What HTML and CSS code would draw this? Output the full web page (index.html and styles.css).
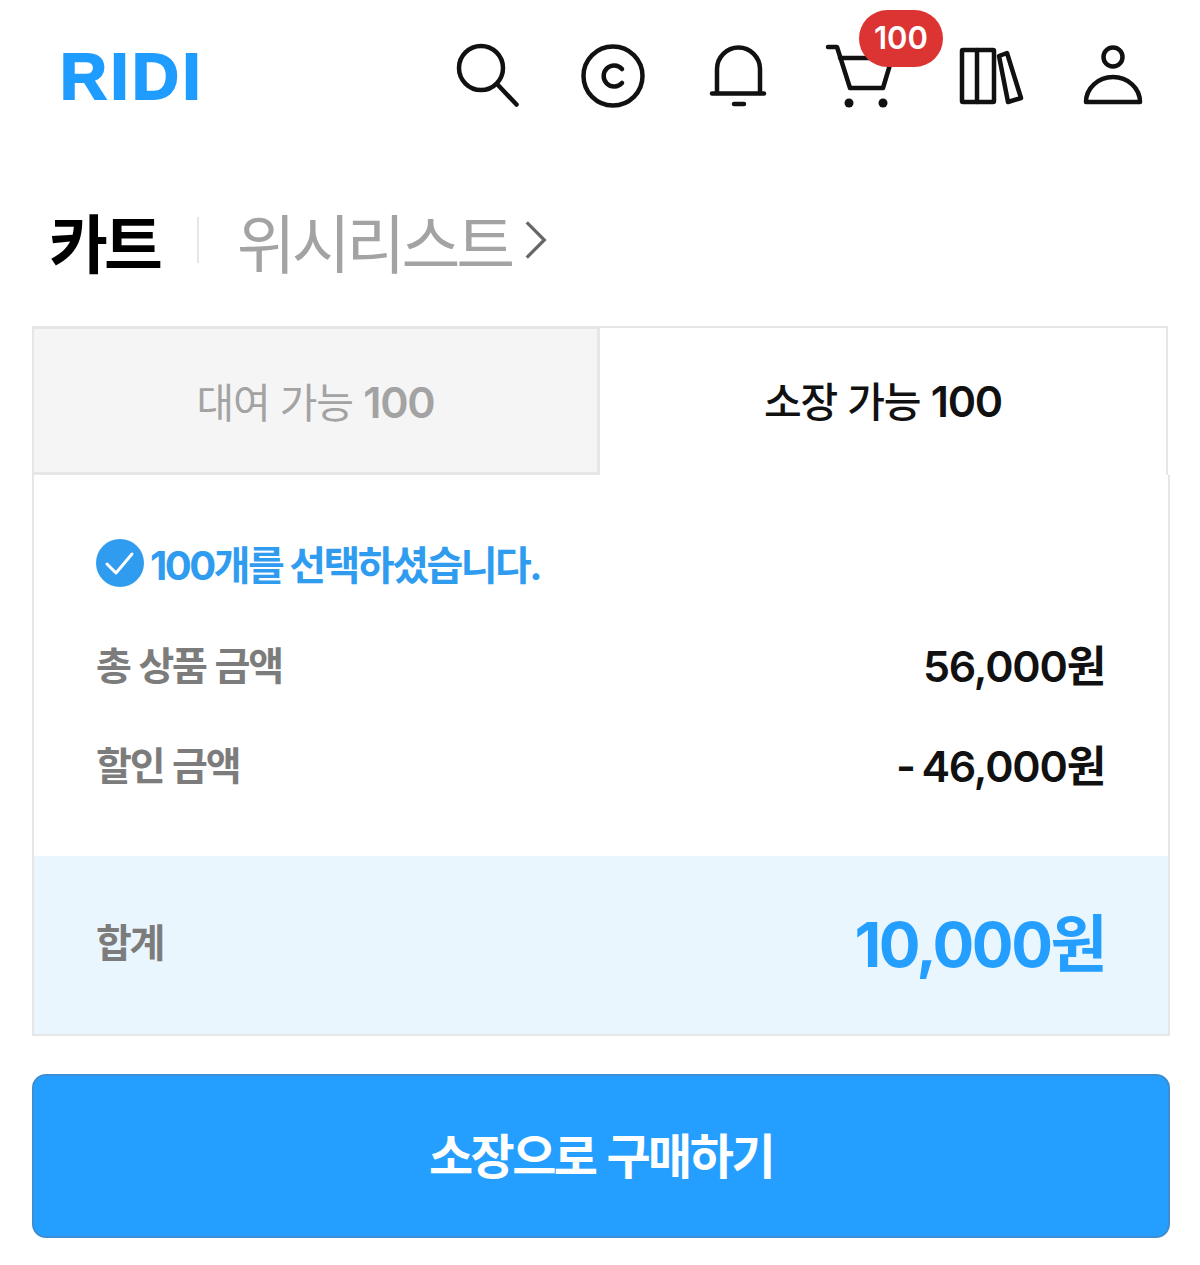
FILE: index.html
```html
<!DOCTYPE html>
<html lang="ko">
<head>
<meta charset="UTF-8" />
<meta name="viewport" content="width=device-width, initial-scale=1" />
<title>RIDI 카트</title>
<link rel="stylesheet" href="styles.css">
</head>
<body>

<header class="topo">
  <div class="logo">RIDI</div>
  <nav class="icones">
    <svg viewBox="0 0 72 72"><circle cx="29" cy="28" r="22"/><path d="M46 45L64.500 64.500"/></svg>
    <svg viewBox="0 0 72 72"><circle cx="36" cy="36" r="29.500"/><path d="M45 29A10.500 10.500 0 1 0 45 43"/></svg>
    <svg viewBox="0 0 72 72"><path d="M10 53.500H62"/><path d="M15 53V29A21.500 21.500 0 0 1 58 29V53"/><path d="M32 64H42"/></svg>
    <div class="carrinho">
      <svg viewBox="0 0 72 72"><path d="M4 7H13L26 48H59L68 18H16"/><circle class="cheio" cx="25" cy="63" r="4.500"/><circle class="cheio" cx="59" cy="63" r="4.500"/></svg>
      <span class="badge">100</span>
    </div>
    <svg class="livros" viewBox="0 0 72 72"><rect x="8" y="10" width="32" height="52" rx="1"/><path d="M23 10V62"/><path d="M45 16L53 13L67 58L54 62Z"/></svg>
    <svg viewBox="0 0 72 72"><circle cx="36" cy="17" r="9.500"/><path d="M9 62H63A27 25 0 0 0 9 62Z"/></svg>
  </nav>
</header>

<main class="carrinho-pagina">
  <div class="titulo">
    <h1>카트</h1>
    <span class="divisor"></span>
    <a class="wishlist" href="#">위시리스트
      <svg viewBox="0 0 26 44"><path d="M3 3L22 22L3 41"/></svg>
    </a>
  </div>

  <div class="abas">
    <div class="aba inativa">대여 가능 <b>100</b></div>
    <div class="aba ativa">소장 가능 <b>100</b></div>
  </div>

  <section class="painel">
    <div class="resumo">
      <div class="selecao">
        <svg viewBox="0 0 48 48"><circle cx="24" cy="24" r="24"/><path d="M11 25L20 34L36 15"/></svg>
        <span>100개를 선택하셨습니다.</span>
      </div>
      <div class="linha"><span>총 상품 금액</span><strong>56,000원</strong></div>
      <div class="linha"><span>할인 금액</span><strong class="desconto">- 46,000원</strong></div>
    </div>
    <div class="total">
      <span>합계</span>
      <strong>10,000원</strong>
    </div>
  </section>

  <button class="comprar">소장으로 구매하기</button>
</main>

</body>
</html>
```

FILE: styles.css
```css
* {
  box-sizing: border-box;
}
body {
  margin: 0;
  background: #fff;
  color: #111;
  font-family: 'Noto Sans CJK KR', 'Noto Sans', sans-serif;
}

/* Topo */
.topo {
  display: flex;
  justify-content: space-between;
  align-items: center;
  height: 152px;
  padding: 0 51px 0 60px;
}
.logo {
  color: #1f9cff;
  font-family: 'Liberation Sans', Arial, sans-serif;
  font-size: 65px;
  font-weight: 700;
  letter-spacing: 3.500px;
  line-height: 1;
  -webkit-text-stroke: 2px #1f9cff;
}
.icones {
  display: flex;
  align-items: center;
  gap: 53px;
}
.icones svg {
  display: block;
  width: 72px;
  height: 72px;
  fill: none;
  stroke: #111;
  stroke-width: 4.5;
  stroke-linecap: round;
  stroke-linejoin: round;
}
.icones .cheio {
  fill: #111;
  stroke: none;
}
.carrinho {
  position: relative;
  margin: 0 5px 0 -3px;
}
.icones .livros {
  margin-right: -2px;
}
.badge {
  position: absolute;
  top: -30px;
  left: 35px;
  width: 84px;
  height: 57px;
  border-radius: 29px;
  background: #dc3333;
  color: #fff;
  font-family: Inter, sans-serif;
  font-size: 31px;
  font-weight: 600;
  line-height: 55px;
  text-align: center;
}

/* Titulo */
.carrinho-pagina {
  padding: 0 30px 0 32px;
}
.titulo {
  display: flex;
  align-items: center;
  height: 174px;
  padding-left: 17px;
  padding-top: 1px;
}
h1 {
  margin: 0;
  font-size: 64px;
  font-weight: 700;
  letter-spacing: -4px;
  color: #000;
}
.divisor {
  width: 2px;
  height: 46px;
  margin: 0 38px;
  background: #e6e6e6;
}
.wishlist {
  display: flex;
  align-items: center;
  gap: 13px;
  color: #a3a3a3;
  font-size: 64px;
  letter-spacing: -4px;
  text-decoration: none;
}
.wishlist svg {
  width: 24px;
  height: 42px;
  fill: none;
  stroke: #666;
  stroke-width: 3.5;
}

/* Abas */
.abas {
  display: flex;
  width: 1136px;
}
.aba {
  flex: 0 0 50%;
  height: 149px;
  border: solid #e6e6e6;
  text-align: center;
  font-size: 41px;
  letter-spacing: -1.200px;
  line-height: 142px;
}
.aba b {
  font-family: Inter, sans-serif;
  font-weight: 600;
  font-size: 43px;
}
.inativa {
  border-width: 3px 3px 3px 2px;
  background: #f5f5f5;
  color: #a3a3a3;
}
.ativa {
  border-width: 2px 2px 0 0;
  color: #111;
  font-weight: 500;
}

/* Painel */
.painel {
  border: solid #e6e6e6;
  border-width: 0 2px 2px;
}
.resumo {
  padding: 58px 63px 63px 62px;
}
.selecao {
  display: flex;
  align-items: center;
  gap: 6px;
  height: 60px;
  color: #2f9cf0;
  font-family: Inter, 'Noto Sans CJK KR', sans-serif;
  font-size: 40px;
  font-weight: 700;
  letter-spacing: -2.500px;
}
.selecao svg {
  width: 48px;
  height: 48px;
  fill: #2f9cf0;
}
.selecao path {
  fill: none;
  stroke: #fff;
  stroke-width: 3;
  stroke-linecap: round;
  stroke-linejoin: round;
}
.linha {
  display: flex;
  justify-content: space-between;
  align-items: center;
  height: 60px;
  margin-top: 40px;
  font-size: 39px;
  letter-spacing: -2.200px;
}
.linha span {
  color: #7c7c7c;
  font-weight: 700;
}
.linha strong {
  font-family: Inter, 'Noto Sans CJK KR', sans-serif;
  font-size: 43px;
  font-weight: 600;
  letter-spacing: -1.200px;
}
.linha .desconto {
  word-spacing: -3px;
}
.total {
  display: flex;
  justify-content: space-between;
  align-items: center;
  height: 178px;
  padding: 0 63px 10px 62px;
  background: #eaf6fe;
}
.total span {
  color: #7c7c7c;
  font-size: 39px;
  font-weight: 700;
  letter-spacing: -2.500px;
}
.total strong {
  color: #259fff;
  font-family: Inter, 'Noto Sans CJK KR', sans-serif;
  font-size: 62px;
  font-weight: 700;
  letter-spacing: -2.500px;
}

/* Botao */
.comprar {
  display: block;
  width: 100%;
  height: 164px;
  margin-top: 38px;
  padding-bottom: 8px;
  border: 2px solid #3b8ed4;
  border-radius: 14px;
  background: #259fff;
  color: #fff;
  font-family: inherit;
  font-size: 48px;
  font-weight: 700;
  letter-spacing: -2.500px;
  cursor: pointer;
}
```
